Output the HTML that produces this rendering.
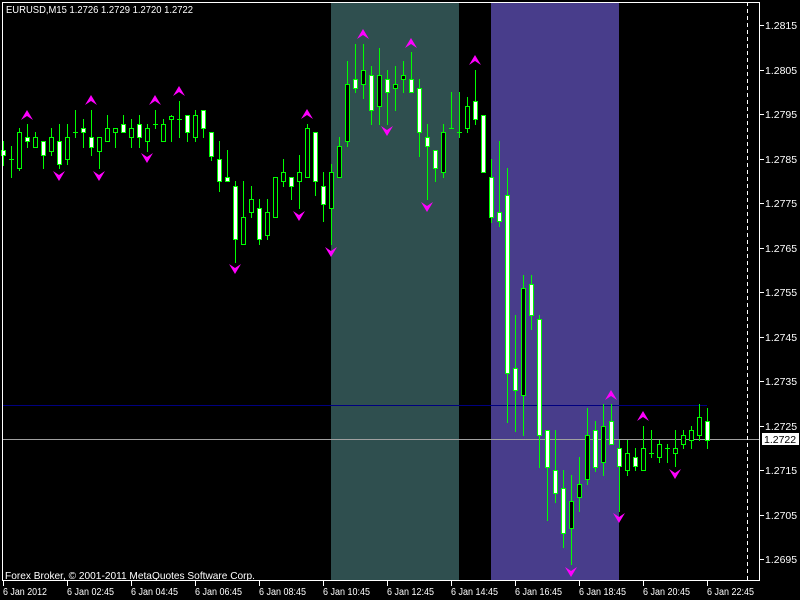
<!DOCTYPE html>
<html><head><meta charset="utf-8"><style>
html,body{margin:0;padding:0;background:#000;width:800px;height:600px;overflow:hidden}
svg{display:block}
text{font-family:"Liberation Sans",sans-serif;font-size:10.5px;fill:#fff}
</style></head><body>
<svg id="s" width="800" height="600" xmlns="http://www.w3.org/2000/svg" shape-rendering="crispEdges">
<rect width="800" height="600" fill="#000"/>
<rect x="331" y="2" width="128" height="579" fill="#2F4F4F"/>
<rect x="491" y="2" width="128" height="579" fill="#483D8B"/>
<line x1="2" y1="405.5" x2="707" y2="405.5" stroke="#000080"/>
<line x1="2" y1="439.5" x2="760" y2="439.5" stroke="#a0a0a0"/>
<line x1="747.5" y1="2" x2="747.5" y2="581" stroke="#fff" stroke-dasharray="4,3"/>
<g id="c"></g>
<rect x="2.5" y="2.5" width="757" height="578" fill="none" stroke="#fff"/>
<text x="6" y="13" textLength="187" lengthAdjust="spacingAndGlyphs">EURUSD,M15  1.2726 1.2729 1.2720 1.2722</text>
<text x="5" y="579" textLength="250" lengthAdjust="spacingAndGlyphs">Forex Broker, © 2001-2011 MetaQuotes Software Corp.</text>
<g id="ax"></g>
<rect x="762" y="433" width="37" height="12" fill="#fff"/>
<text x="764" y="443" style="fill:#000">1.2722</text>
</svg>
<script>
var d=[[3,141,150,155,165,1],[11,146,159,159,177,0],[19,128,132,168,170,0],[27,124,137,141,147,1],[35,132,137,147,147,0],[43,141,141,155,168,1],[51,128,137,151,155,0],[59,124,141,164,168,1],[67,124,137,159,164,0],[75,110,132,132,137,0],[83,119,128,132,147,1],[91,110,137,147,155,1],[99,137,137,151,168,0],[107,115,128,141,141,0],[115,128,128,132,147,0],[123,115,124,132,132,1],[131,119,128,137,147,0],[139,115,124,137,147,1],[147,124,128,141,151,0],[155,110,124,124,128,0],[163,119,124,141,141,0],[171,115,116,119,141,0],[179,101,119,119,137,0],[187,115,115,132,141,1],[195,110,115,137,141,0],[203,110,110,128,137,1],[211,132,132,156,160,1],[219,141,159,181,191,1],[227,150,177,181,181,1],[235,181,186,239,262,1],[243,181,217,244,244,0],[251,186,199,212,217,0],[259,199,208,239,244,1],[267,199,212,235,239,0],[275,177,177,217,217,0],[283,159,172,181,186,0],[291,177,177,186,199,1],[299,155,172,181,208,0],[307,124,128,177,177,0],[315,132,132,181,195,1],[323,172,186,204,221,1],[331,164,172,208,244,0],[339,137,146,177,177,0],[347,61,84,141,146,0],[355,44,79,88,92,1],[363,44,70,84,98,0],[371,66,75,110,124,1],[379,48,75,106,124,0],[387,70,79,92,124,1],[395,66,84,88,110,0],[403,61,75,79,92,0],[411,52,79,92,92,1],[419,79,88,132,156,1],[427,124,137,146,199,1],[435,150,150,168,181,1],[443,124,132,172,177,0],[451,92,128,128,128,0],[459,92,132,132,137,0],[467,97,106,128,132,0],[475,70,101,119,124,1],[483,115,115,172,172,1],[491,159,177,217,222,1],[499,141,212,221,226,1],[507,168,195,373,422,1],[515,315,368,390,431,1],[523,275,288,395,435,0],[531,275,284,315,329,1],[539,315,319,435,467,1],[547,430,430,467,520,1],[555,430,470,493,502,1],[563,470,488,533,547,1],[571,475,501,528,564,0],[579,457,484,497,511,0],[587,408,435,479,484,0],[595,421,430,467,471,1],[603,404,426,462,475,0],[611,404,421,444,444,1],[619,440,448,466,511,1],[627,440,453,470,475,0],[635,448,457,466,470,1],[643,426,448,470,470,0],[651,430,453,453,457,0],[659,440,444,457,462,0],[667,444,448,448,462,0],[675,430,448,453,466,0],[683,430,435,444,448,0],[691,426,430,440,448,0],[699,404,417,435,440,0],[707,408,421,440,448,1]];
var h='';
d.forEach(function(c){var x=c[0];
h+='<line x1="'+(x+.5)+'" y1="'+c[1]+'" x2="'+(x+.5)+'" y2="'+(c[4]+1)+'" stroke="#00ff00"/>';
if(c[3]-c[2]<1){h+='<line x1="'+(x-2)+'" y1="'+(c[2]+.5)+'" x2="'+(x+3)+'" y2="'+(c[2]+.5)+'" stroke="#00ff00"/>';}
else h+='<rect x="'+(x-1.5)+'" y="'+(c[2]+.5)+'" width="4" height="'+(c[3]-c[2])+'" fill="'+(c[5]?'#fff':'#000')+'" stroke="#00ff00"/>';});
var up=[[27,115],[91,100],[155,100],[179,91],[307,114],[363,34],[411,43],[475,60],[611,395],[643,416]];
var dn=[[59,176],[99,176],[147,158],[235,269],[299,216],[331,252],[387,131],[427,207],[571,572],[619,518],[675,474]];
up.forEach(function(p){h+='<path shape-rendering="auto" d="M'+(p[0]-6)+','+(p[1]+5)+' L'+p[0]+','+(p[1]-5)+' L'+(p[0]+6)+','+(p[1]+5)+' L'+p[0]+','+(p[1]+1)+'Z" fill="#ff00ff"/>';});
dn.forEach(function(p){h+='<path shape-rendering="auto" d="M'+(p[0]-6)+','+(p[1]-5)+' L'+p[0]+','+(p[1]+5)+' L'+(p[0]+6)+','+(p[1]-5)+' L'+p[0]+','+(p[1]-1)+'Z" fill="#ff00ff"/>';});
document.getElementById('c').innerHTML=h;
var a='';
for(var i=0;i<13;i++){var y=Math.round(25+i*44.5);var v=(1.2815-i*0.001).toFixed(4);
a+='<line x1="760" y1="'+(y+.5)+'" x2="764" y2="'+(y+.5)+'" stroke="#fff"/><text x="765" y="'+(y+4)+'">'+v+'</text>';}
var t=['6 Jan 2012','6 Jan 02:45','6 Jan 04:45','6 Jan 06:45','6 Jan 08:45','6 Jan 10:45','6 Jan 12:45','6 Jan 14:45','6 Jan 16:45','6 Jan 18:45','6 Jan 20:45','6 Jan 22:45'];
for(var j=0;j<12;j++){var x=3+j*64;a+='<line x1="'+(x+.5)+'" y1="581" x2="'+(x+.5)+'" y2="586" stroke="#fff"/><text x="'+(x)+'" y="595" textLength="'+(j==0?44:47)+'" lengthAdjust="spacingAndGlyphs">'+t[j]+'</text>';}
document.getElementById('ax').innerHTML=a;
</script>
</body></html>
